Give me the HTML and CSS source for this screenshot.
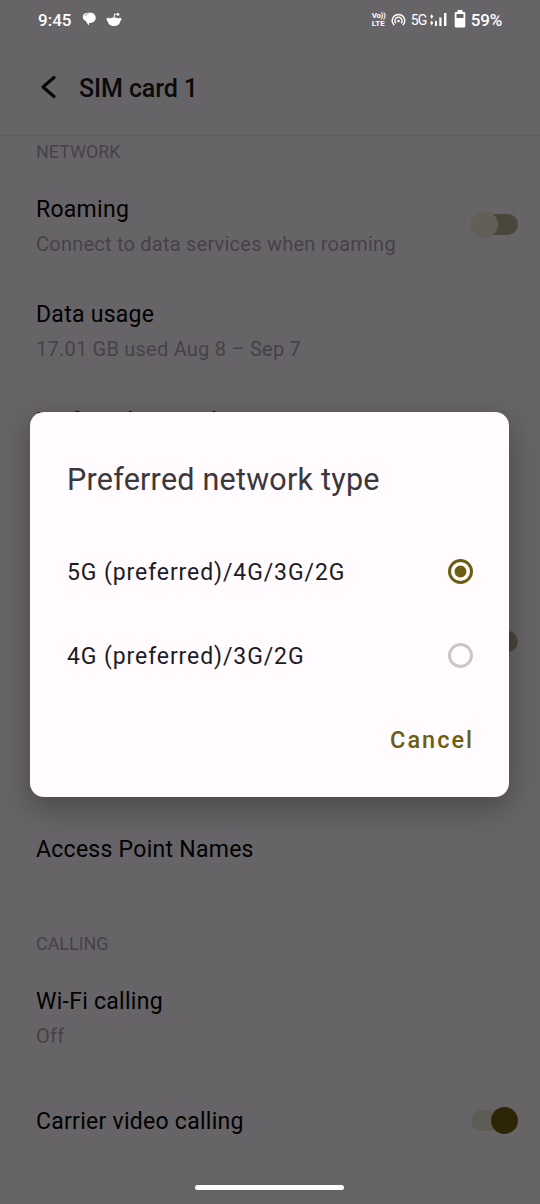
FILE: index.html
```html
<!DOCTYPE html>
<html lang="en">
<head>
<meta charset="utf-8">
<title>SIM card 1</title>
<link rel="stylesheet" href="styles.css">
</head>
<body>
<div class="phone">
  <div class="status">
    <span class="clock">9:45</span>
    <svg class="chat" width="15" height="15" viewBox="0 0 15 15"><path d="M5 1C2.500 1 .8 2.500.8 4.800c0 2 1.200 3.600 3 4.200.8 2 2 3.200 3.200 4.500V11c4 0 6.700-2 6.700-5C13.700 3 11.500.8 8.500.8 7 .6 6 .7 5 1z" fill="#fff"/><path d="M2.800 4C3.300 2.700 4.700 2 6.500 2" fill="none" stroke="#676468" stroke-width=".6"/></svg>
    <svg class="reddit" width="16" height="15" viewBox="0 0 16 15"><path d="M1 6.200c1-.8 2-.4 2.500.2C6 5.200 10 5.200 12.500 6.400c.6-.7 1.700-.9 2.500-.1.900.9.300 2.100-.6 2.600C14 11.800 11.400 14 8 14s-6-2.200-6.400-5.100C.6 8.300.2 7.100 1 6.200z" fill="#fff"/><path d="M8 6l.6-4 3 .3" fill="none" stroke="#fff"/><circle cx="12" cy="2.400" r="1.300" fill="#fff"/></svg>
    <span class="grow"></span>
    <span class="volte"><span>Vo))</span><span>LTE</span></span>
    <svg class="hotspot" width="15" height="14" viewBox="0 0 15 14" fill="none" stroke="#fff" stroke-width="1.500"><path d="M3.200 12.300A6.300 6.300 0 1 1 11.800 12.300"/><path d="M4.900 10.300A3.600 3.600 0 1 1 10.100 10.300"/><circle cx="7.500" cy="8" r="1.300" fill="#fff" stroke="none"/></svg>
    <span class="fiveg">5G</span>
    <svg class="signal" width="17" height="16" viewBox="0 0 17 16" fill="#fff"><path d="M0 6l1.700-3 1.700 3zM0 11.500l1.700 3 1.700-3zM1 6h1.400v1.500H1zM1 10h1.400v1.500H1zM5 10h2v5H5zM9.300 6.500h2.200V15H9.300zM14 2h2.400v13H14z"/></svg>
    <svg class="battery" width="12" height="18" viewBox="0 0 12 18"><path d="M3.500 0h5v2H10q1.300 0 1.300 1.300v13Q11.300 17.600 10 17.600H2Q.7 17.600.7 16.300v-13Q.7 2 2 2h1.500z" fill="#fff"/><path d="M2.500 4h7v4h-7z" fill="#676468"/></svg>
    <span class="percent">59%</span>
  </div>
  <header class="header">
    <svg class="back" width="20" height="25" viewBox="0 0 20 25"><path d="M16 2.500L5 12 16 21.500" fill="none" stroke="#080808" stroke-width="3.200" stroke-linecap="round" stroke-linejoin="round"/></svg>
    <h1 class="title">SIM card 1</h1>
  </header>
  <main class="list">
    <div class="section">NETWORK</div>
    <div class="row">
      <div><div class="name roaming">Roaming</div><div class="note connect">Connect to data services when roaming</div></div>
      <span class="switch off raised"></span>
    </div>
    <div class="row"><div><div class="name">Data usage</div><div class="note">17.01 GB used Aug 8 – Sep 7</div></div></div>
    <div class="row preferred"><div class="name">Preferred network type</div></div>
    <div class="row covered"><div></div><span class="switch off flipped"></span></div>
    <div class="row single"><div class="name">Access Point Names</div></div>
    <div class="section calling">CALLING</div>
    <div class="row"><div><div class="name wifi">Wi-Fi calling</div><div class="note">Off</div></div></div>
    <div class="row carrier"><div class="name carrier-name">Carrier video calling</div><span class="switch on"></span></div>
  </main>
  <div class="homebar"></div>
  <section class="dialog">
    <h2 class="dialog-title">Preferred network type</h2>
    <div class="option"><span>5G (preferred)/4G/3G/2G</span><i class="radio checked"></i></div>
    <div class="option"><span>4G (preferred)/3G/2G</span><i class="radio"></i></div>
    <div class="actions"><span class="cancel">Cancel</span></div>
  </section>
</div>
</body>
</html>
```
FILE: styles.css
```css
* { box-sizing: border-box; }
body { margin: 0; font-family: Roboto, sans-serif; background: #676468; }
.phone { position: relative; width: 540px; height: 1204px; overflow: hidden; background: #676468; color: #000; }
.status { height: 40px; padding: 0 38px; display: flex; align-items: center; color: #fff; white-space: nowrap; }
.grow { flex: 1; }
.clock { width: 44px; font-size: 17px; line-height: 20px; padding-bottom: 1px; font-weight: 500; }
.chat { margin-bottom: 1px; }
.reddit { margin-left: 9px; margin-bottom: 2px; }
.volte { display: flex; flex-direction: column; width: 14px; margin-bottom: 1px; font-size: 8px; line-height: 8px; font-weight: 700; letter-spacing: -0.4px; }
.volte span:last-child { letter-spacing: 0; }
.hotspot { margin-left: 5px; margin-bottom: 1px; }
.fiveg { margin-left: 5px; width: 19px; font-size: 14px; letter-spacing: -0.8px; padding-bottom: 1px; }
.signal { flex: none; margin-bottom: 2px; }
.battery { margin-left: 7px; margin-bottom: 2px; }
.percent { margin-left: 5px; font-size: 17px; font-weight: 500; padding-bottom: 1px; letter-spacing: -0.2px; }
.header { height: 96px; padding: 0 38px; display: flex; align-items: center; border-bottom: 1px solid #5f5c60; }
.title { margin: 1px 0 0 21px; font-size: 25px; font-weight: 500; color: #0b0a0b; letter-spacing: -0.1px; }
.section { height: 38px; padding: 0 36px; font-size: 18px; line-height: 31px; letter-spacing: -0.05px; color: #454247; }
.row { height: 105px; padding: 0 22px 0 36px; display: flex; align-items: center; justify-content: space-between; }
.name { font-size: 23px; line-height: 35px; letter-spacing: 0.27px; }
.note { font-size: 20px; line-height: 35px; letter-spacing: 0.23px; color: #454247; }
.preferred { align-items: flex-start; padding-top: 20px; }
.covered { height: 306px; padding-bottom: 2px; }
.single { height: 133px; padding-bottom: 24px; }
.carrier { height: 100px; }
.switch { position: relative; width: 47px; height: 21px; border-radius: 11px; background: #49463c; }
.switch::after { content: ""; position: absolute; left: 0; top: -3px; width: 27px; height: 27px; border-radius: 50%; background: #625f56; }
.raised { margin-bottom: 4px; }
.flipped::after { display: none; }
.on { margin-bottom: 2px; background: #5d5c55; }
.on::after { left: 20px; background: #2e2505; }
.homebar { width: 149px; height: 5px; margin: 14px 0 0 195px; border-radius: 3px; background: #fff; }
.dialog { position: absolute; left: 30px; top: 412px; width: 479px; height: 385px; border-radius: 14px; padding: 48px 36px 0 37px; background: #fffbff; box-shadow: 0 10px 30px rgba(0, 0, 0, .3); }
.dialog-title { margin: 0 0 31px; font-size: 30.5px; line-height: 39px; font-weight: 400; letter-spacing: 0.23px; color: #3b383a; }
.option { height: 84px; display: flex; align-items: center; justify-content: space-between; font-size: 23px; letter-spacing: 0.9px; color: #1d1b1e; }
.option span { padding-top: 2px; }
.dialog-title + .option { margin-top: -1px; }
.radio { width: 25px; height: 25px; border: 3px solid #c9c5c9; border-radius: 50%; }
.checked { border-color: #6c5e10; background: radial-gradient(circle, #6c5e10 5.500px, transparent 6.300px); }
.actions { display: flex; justify-content: flex-end; align-items: center; height: 84px; }
.cancel { font-size: 23.5px; font-weight: 500; letter-spacing: 2px; color: #6c5e10; margin-right: -1px; padding-top: 2px; }
```
